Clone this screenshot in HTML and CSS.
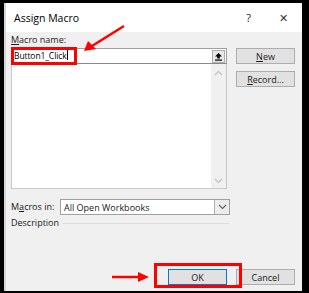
FILE: index.html
```html
<!DOCTYPE html>
<html lang="en">
<head>
    <meta charset="UTF-8">
    <title>Assign Macro</title>
    <link rel="stylesheet" href="styles.css">
</head>
<body>

    <div class="dialog">
        <!-- Title bar -->
        <div class="title-bar">
            <span class="title">Assign Macro</span>
            <span class="help">?</span>
            <span class="close">&#x2715;</span>
        </div>

        <div class="content">
            <div class="top">
                <div class="left">
                    <div class="label"><u>M</u>acro name:</div>
                    <div class="name-input">
                        <span class="name-text">Button1_Click</span>
                        <span class="collapse-btn">
                            <svg width="9" height="9" viewBox="0 0 9 9">
                                <path d="M4.5 1 L1 4.5 H3.2 V6.5 H5.8 V4.5 H8 Z" fill="#000"/>
                                <rect x="1" y="7.5" width="7" height="1.2" fill="#000"/>
                            </svg>
                        </span>
                    </div>
                    <div class="list-box">
                        <div class="list-items"></div>
                        <div class="scrollbar">
                            <svg width="9" height="6" viewBox="0 0 9 6"><path d="M1 5 L4.5 1.5 L8 5" stroke="#c0c0c0" stroke-width="1.2" fill="none"/></svg>
                            <svg width="9" height="6" viewBox="0 0 9 6"><path d="M1 1 L4.5 4.5 L8 1" stroke="#c0c0c0" stroke-width="1.2" fill="none"/></svg>
                        </div>
                    </div>
                </div>
                <div class="right">
                    <div class="button"><u>N</u>ew</div>
                    <div class="button"><u>R</u>ecord...</div>
                </div>
            </div>

            <div class="macros-in">
                <span class="label">M<u>a</u>cros in:</span>
                <div class="select">
                    <span>All Open Workbooks</span>
                    <span class="select-arrow">
                        <svg width="9" height="6" viewBox="0 0 9 6"><path d="M1 1 L4.5 4.5 L8 1" stroke="#606060" stroke-width="1.1" fill="none"/></svg>
                    </span>
                </div>
            </div>

            <div class="description">
                <span class="label">Description</span>
                <span class="rule"></span>
            </div>

            <div class="footer">
                <div class="button default">OK</div>
                <div class="button">Cancel</div>
            </div>
        </div>
    </div>

    <!-- Red annotations drawn over the dialog -->
    <svg class="annotations" width="309" height="293" viewBox="0 0 309 293">
        <rect x="12.5" y="48.5" width="63" height="15" fill="none" stroke="#f00" stroke-width="3"/>
        <line x1="124" y1="26" x2="92" y2="46" stroke="#f00" stroke-width="2.5"/>
        <path d="M84 51 L88 41 L96 49 Z" fill="#f00"/>
        <rect x="155.5" y="264.5" width="85" height="22" fill="none" stroke="#f00" stroke-width="3"/>
        <line x1="112" y1="277" x2="140" y2="277" stroke="#f00" stroke-width="2.5"/>
        <path d="M149 277 L138 272 L138 282 Z" fill="#f00"/>
    </svg>

</body>
</html>
```

FILE: styles.css
```css
body {
    margin: 0;
    width: 309px;
    height: 293px;
    background-color: #000;
    font-family: 'Open Sans', 'Noto Sans', sans-serif;
    font-size: 9px;
    color: #1a1a1a;
    position: relative;
    overflow: hidden;
}
.dialog {
    position: absolute;
    left: 4px;
    top: 3px;
    width: 298px;
    height: 288px;
    background-color: #f0f0f0;
    display: flex;
    flex-direction: column;
    box-shadow: inset 2px 0 0 #d6d6d6;
}
.title-bar {
    height: 29px;
    background-color: #fff;
    display: flex;
    align-items: center;
    padding-left: 8px;
    padding-right: 14px;
    margin-left: 2px;
    flex-shrink: 0;
}
.title {
    font-size: 10.5px;
    flex: 1;
    color: #000;
}
.help {
    font-size: 11px;
    margin-right: 28px;
}
.close {
    font-size: 11px;
    color: #333;
}
.content {
    flex: 1;
    display: flex;
    flex-direction: column;
    padding: 2px 7px 6px 7px;
}
.top {
    display: flex;
    gap: 9px;
}
.left {
    width: 216px;
    display: flex;
    flex-direction: column;
}
.label {
    height: 14px;
    line-height: 12px;
    color: #1a1a1a;
}
.name-input {
    height: 16px;
    box-sizing: border-box;
    background-color: #fff;
    border: 1px solid #a0a0a0;
    border-bottom-color: #8a8a8a;
    display: flex;
    align-items: center;
    padding-left: 2px;
}
.name-text {
    flex: 1;
    color: #000;
    font-size: 8.5px;
    letter-spacing: -0.1px;
    line-height: 12px;
}
.name-text::after {
    content: "";
    display: inline-block;
    width: 1px;
    height: 10px;
    background-color: #000;
    vertical-align: -1px;
}
.collapse-btn {
    width: 13px;
    height: 13px;
    box-sizing: border-box;
    border: 1px solid #adadad;
    background-color: #e8e8e8;
    display: flex;
    align-items: center;
    justify-content: center;
    margin-right: 1px;
}
.list-box {
    height: 125px;
    box-sizing: border-box;
    border: 1px solid #c8c8c8;
    border-top: none;
    background-color: #fff;
    display: flex;
}
.list-items {
    flex: 1;
}
.scrollbar {
    width: 15px;
    background-color: #f0f0f0;
    display: flex;
    flex-direction: column;
    justify-content: space-between;
    align-items: center;
    padding: 6px 0 4px 0;
}
.right {
    display: flex;
    flex-direction: column;
    gap: 7px;
    padding-top: 14px;
}
.button {
    width: 59px;
    height: 16px;
    box-sizing: border-box;
    background-color: #e1e1e1;
    border: 1px solid #adadad;
    display: flex;
    align-items: center;
    justify-content: center;
    color: #1a1a1a;
}
.button.default {
    border-color: #0078d7;
}
.macros-in {
    display: flex;
    align-items: center;
    margin-top: 10px;
    height: 16px;
}
.macros-in .label {
    width: 49px;
    height: auto;
}
.select {
    width: 170px;
    height: 16px;
    box-sizing: border-box;
    border: 1px solid #a0a0a0;
    background-color: #fff;
    display: flex;
    align-items: center;
    padding-left: 3px;
}
.select span:first-child {
    flex: 1;
}
.select-arrow {
    width: 15px;
    height: 14px;
    box-sizing: border-box;
    border-left: 1px solid #b0b0b0;
    background-color: #ececec;
    display: flex;
    align-items: center;
    justify-content: center;
}
.description {
    display: flex;
    align-items: center;
    margin-top: 1px;
    height: 14px;
}
.description .label {
    height: auto;
    margin-right: 4px;
}
.rule {
    width: 166px;
    height: 1px;
    background-color: #dcdcdc;
}
.footer {
    margin-top: auto;
    display: flex;
    justify-content: flex-end;
    gap: 9px;
}
.annotations {
    position: absolute;
    left: 0;
    top: 0;
}
```
